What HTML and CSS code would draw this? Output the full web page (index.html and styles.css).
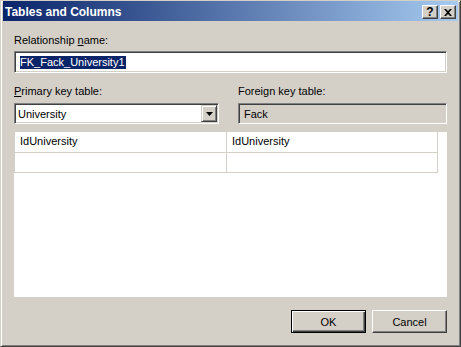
FILE: index.html
```html
<!DOCTYPE html>
<html lang="en">
<head>
    <meta charset="UTF-8">
    <title>Tables and Columns</title>
    <link rel="stylesheet" href="styles.css">
</head>
<body>
    <div class="window">
        <div class="titlebar">
            <span class="title">Tables and Columns</span>
            <div class="caption-buttons">
                <span class="cap-btn help">?</span>
                <span class="cap-btn">
                    <svg width="8" height="7" viewBox="0 0 8 7">
                        <path d="M0 0h2l2 2l2-2h2l-3 3.5l3 3.5h-2l-2-2l-2 2h-2l3-3.5z" fill="#000"/>
                    </svg>
                </span>
            </div>
        </div>
        <div class="content">
            <div class="label">Relationship <u>n</u>ame:</div>
            <div class="textbox"><span class="selected">FK_Fack_University1</span></div>

            <div class="tables-row">
                <div class="field">
                    <div class="label"><u>P</u>rimary key table:</div>
                    <div class="combo">
                        <span class="combo-text">University</span>
                        <span class="combo-btn">
                            <svg width="7" height="4" viewBox="0 0 7 4"><path d="M0 0h7l-3.5 4z" fill="#000"/></svg>
                        </span>
                    </div>
                </div>
                <div class="field">
                    <div class="label">Foreign key table:</div>
                    <div class="textbox readonly">Fack</div>
                </div>
            </div>

            <div class="grid">
                <table class="columns">
                    <tr><td>IdUniversity</td><td>IdUniversity</td></tr>
                    <tr><td></td><td></td></tr>
                </table>
            </div>

            <div class="buttons">
                <button class="btn default">OK</button>
                <button class="btn">Cancel</button>
            </div>
        </div>
    </div>
</body>
</html>
```

FILE: styles.css
```css
* {
    box-sizing: border-box;
}
body {
    margin: 0;
    font-family: "Liberation Sans", Arial, sans-serif;
    font-size: 11px;
    color: #000;
}
.window {
    width: 461px;
    height: 347px;
    background: #d4d0c8;
    border: 1px solid;
    border-color: #d4d0c8 #404040 #404040 #d4d0c8;
    box-shadow: inset 1px 1px #fff, inset -1px -1px #808080;
    padding: 0 2px 2px 2px;
    display: flex;
    flex-direction: column;
}
.titlebar {
    height: 20px;
    padding: 2px 2px 0 2px;
    background: linear-gradient(to right, #0a246a, #a6caf0);
    display: flex;
    align-items: center;
    justify-content: space-between;
}
.title {
    color: #fff;
    font-weight: bold;
    font-size: 12px;
    line-height: 14px;
}
.caption-buttons {
    display: flex;
    gap: 2px;
}
.cap-btn {
    width: 16px;
    height: 14px;
    background: #d4d0c8;
    border: 1px solid;
    border-color: #fff #404040 #404040 #fff;
    box-shadow: inset -1px -1px #808080;
    display: flex;
    align-items: center;
    justify-content: center;
}
.cap-btn.help {
    font-weight: bold;
    font-size: 12px;
    line-height: 12px;
}
.content {
    flex: 1;
    display: flex;
    flex-direction: column;
    padding: 13px 11px 11px 11px;
}
.label {
    line-height: 13px;
    margin-bottom: 4px;
}
.textbox,
.combo {
    background: #fff;
    border: 1px solid;
    border-color: #808080 #fff #fff #808080;
    box-shadow: inset 1px 1px #404040, inset -1px -1px #d4d0c8;
    display: flex;
    align-items: center;
}
.textbox {
    height: 22px;
    padding-left: 5px;
}
.textbox.readonly {
    background: #d4d0c8;
    height: 21px;
}
.selected {
    background: #0a246a;
    color: #fff;
    line-height: 13px;
    padding: 0 1px 0 0;
}
.tables-row {
    display: grid;
    grid-template-columns: 205px 209px;
    column-gap: 19px;
    margin-top: 12px;
}
.tables-row .label {
    margin-bottom: 5px;
}
.combo {
    height: 21px;
    padding: 1px;
    justify-content: space-between;
}
.combo-text {
    padding-left: 2px;
}
.combo-btn {
    width: 16px;
    height: 17px;
    background: #d4d0c8;
    border: 1px solid;
    border-color: #d4d0c8 #404040 #404040 #d4d0c8;
    box-shadow: inset 1px 1px #fff, inset -1px -1px #808080;
    display: flex;
    align-items: center;
    justify-content: center;
}
.grid {
    flex: 1;
    margin-top: 8px;
    background: #fff;
}
.columns {
    border-collapse: collapse;
    table-layout: fixed;
    width: 424px;
}
.columns td {
    height: 20px;
    padding: 0 0 0 5px;
    border-left: 1px solid #d4d0c8;
    border-right: 1px solid #d4d0c8;
    border-bottom: 1px solid #d4d0c8;
    line-height: 13px;
    white-space: nowrap;
}
.columns td:first-child {
    width: 212px;
}
.buttons {
    display: flex;
    justify-content: flex-end;
    gap: 6px;
    margin-top: 13px;
}
.btn {
    width: 75px;
    height: 23px;
    margin: 0;
    padding: 0;
    font-family: "Liberation Sans", Arial, sans-serif;
    font-size: 11px;
    color: #000;
    background: #d4d0c8;
    border: 1px solid;
    border-color: #fff #404040 #404040 #fff;
    box-shadow: inset -1px -1px #808080;
    border-radius: 0;
}
.btn.default {
    border-color: #000;
    box-shadow: inset 1px 1px #fff, inset -1px -1px #404040, inset -2px -2px #808080;
}
```
